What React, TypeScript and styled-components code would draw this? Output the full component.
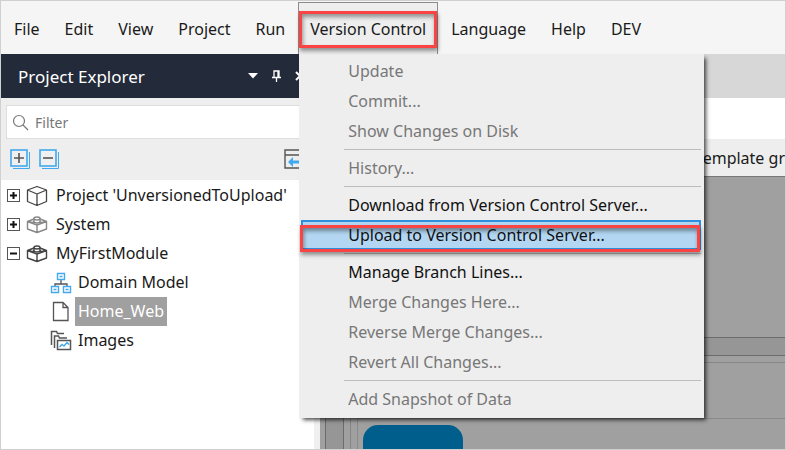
import React from "react";
import styled, { createGlobalStyle, css } from "styled-components";

const Global = createGlobalStyle`
  *, *::before, *::after { box-sizing: border-box; }
  body { margin: 0; font-family: "Noto Sans", "Segoe UI", sans-serif; font-size: 16px; color: #1a1a1a; }
  button, input { font: inherit; color: inherit; }
  ul { list-style: none; margin: 0; padding: 0; }
  svg { display: block; flex: none; }
`;

const Frame = styled.div`
  display: flex;
  flex-direction: column;
  height: 100vh;
  overflow: hidden;
  border: 1px solid #d0d0d0;
  background: #fff;
`;

const MenuBar = styled.nav`
  display: flex;
  flex: none;
  gap: 1px;
  height: 53px;
  padding: 1px 0 0 1px;
  background: #f5f5f5;
`;

const MenuSlot = styled.div<{ $open?: boolean }>`
  position: relative;
  display: flex;
  border: 1px solid transparent;
  border-bottom: 0;
  ${(p) => p.$open && css`background: #eee; border-color: #8c8c8c;`}
`;

const MenuButton = styled.button`
  border: 0;
  padding: 0 11px;
  background: none;
  white-space: nowrap;
`;

const Dropdown = styled.ul`
  position: absolute;
  z-index: 2;
  top: 100%;
  left: 0;
  width: 405px;
  padding: 2px 3px 4px 2px;
  background: #eee;
  box-shadow: 3px 3px 4px -1px rgba(0, 0, 0, 0.7);
`;

const Entry = styled.button<{ $active?: boolean }>`
  display: block;
  width: 100%;
  height: 30px;
  padding: 0 0 0 46px;
  border: 1px solid transparent;
  background: none;
  color: #111;
  text-align: left;
  white-space: nowrap;
  &:disabled { color: #777; }
  ${(p) => p.$active && css`background: #b3d7f3; border: 2px solid #2f8fdd; padding-left: 45px;`}
`;

const Separator = styled.li`
  height: 7px;
  margin-left: 43px;
  padding-top: 3px;
  &::before { content: ""; display: block; height: 1px; background: #bdbdbd; }
`;

const EntryItem = styled.li`
  position: relative;
`;

const Callout = styled.span<{ $for: "menu" | "entry" }>`
  position: absolute;
  z-index: 3;
  pointer-events: none;
  border: 3px solid #fa4343;
  box-shadow: 1px 3px 4px rgba(0, 0, 0, 0.4), inset 1px 3px 4px rgba(0, 0, 0, 0.4);
  ${(p) => (p.$for === "menu" ? css`inset: 8px 0 6px 0;` : css`inset: 5px 1px -2px -1px;`)}
`;

const Workspace = styled.div`
  display: flex;
  flex: 1;
  min-height: 0;
`;

const Sidebar = styled.aside`
  display: flex;
  flex-direction: column;
  flex: none;
  width: 319px;
  border-right: 6px solid #f0f0f0;
  background: #fff;
`;

const PanelTitle = styled.header`
  display: flex;
  align-items: center;
  flex: none;
  gap: 14px;
  height: 44px;
  padding: 0 9px 0 17px;
  background: #232a3a;
  color: #fff;
  h2 { flex: 1; margin: 0; font-size: 17px; font-weight: 400; }
`;

const IconButton = styled.button`
  display: flex;
  padding: 0;
  border: 0;
  background: none;
`;

const PanelTools = styled.div`
  display: flex;
  flex-direction: column;
  flex: none;
  gap: 10px;
  height: 82px;
  padding: 7px 0 0 5px;
  background: #eee;
`;

const Search = styled.label`
  display: flex;
  align-items: center;
  gap: 6px;
  height: 34px;
  padding-left: 5px;
  border: 1px solid #dedede;
  background: #fff;
  input {
    flex: 1; min-width: 0; border: 0; padding: 0; outline: 0; background: none; font-size: 14px;
  }
  input::placeholder { color: #777; opacity: 1; }
`;

const ToolRow = styled.div`
  display: flex;
  gap: 9px;
  padding: 0 10px 0 4px;
  > :last-child { margin-left: auto; }
`;

const Tree = styled.ul`
  padding-top: 1px;
`;

const Node = styled.li<{ $child?: boolean }>`
  display: flex;
  align-items: center;
  gap: ${(p) => (p.$child ? 3 : 5)}px;
  height: 29px;
  padding-left: ${(p) => (p.$child ? 49 : 5)}px;
`;

const NodeLabel = styled.span<{ $selected?: boolean }>`
  height: 29px;
  padding: 0 3px;
  line-height: 29px;
  white-space: nowrap;
  ${(p) => p.$selected && css`background: #a0a0a0; color: #fff;`}
`;

const Editor = styled.main`
  display: flex;
  flex-direction: column;
  flex: 1;
  min-width: 0;
`;
const TabStrip = styled.div`flex: none; height: 44px; background: #d7d7d7;`;
const TabBody = styled.div`flex: none; height: 41px; background: #fff;`;
const EditorTools = styled.div`
  display: flex;
  justify-content: flex-end;
  align-items: center;
  flex: none;
  height: 37px;
  background: #eee;
`;
const Canvas = styled.div`
  flex: 1;
  min-height: 0;
  overflow: hidden;
  padding: 160px 0 0 5px;
  border-top: 1px solid #787878;
  background: #a0a0a0;
`;
const Page = styled.div`
  padding: 17px 0 0 17px;
  border: solid #6c6c6c;
  border-width: 1px 0 0 1px;
  background: #969696;
`;
const LayoutBox = styled.div`
  padding: 6px 0 0 6px;
  border: solid #6c6c6c;
  border-width: 1px 0 0 1px;
  background: #a0a0a0;
`;
const Region = styled.div`
  padding: 55px 0 0 6px;
  border: solid #868686;
  border-width: 1px 0 0 1px;
`;
const Cell = styled.div`
  padding: 6px 0 0 5px;
  border: solid #8a8a8a;
  border-width: 1px 0 0 1px;
`;
const Widget = styled.div`
  width: 100px;
  height: 60px;
  border-radius: 15px;
  background: #005e8c;
`;

const Expander = ({ open }: { open?: boolean }) => (
  <svg width="15" height="15" viewBox="0 0 15 15" fill="none">
    <rect x="1.500" y="1.500" width="12" height="12" stroke="#555" />
    <path d={open ? "M4 7.500h7" : "M4 7.500h7M7.500 4v7"} stroke="#111" strokeWidth="2" />
  </svg>
);

const Cube = () => (
  <svg width="22" height="22" viewBox="0 0 22 22" fill="none" stroke="#444" strokeWidth="1.300" strokeLinejoin="round">
    <path d="M11 1.500 20.500 5v11.500L11 20.500 1.500 16.500V5zM1.500 5 11 9l9.500-4M11 9v11.500" />
  </svg>
);

const Brick = ({ color }: { color: string }) => (
  <svg width="22" height="22" viewBox="0 0 22 22" fill="none" stroke={color} strokeWidth="1.400" strokeLinejoin="round">
    <path d="M8 5 1.500 7.500v7.500L11 18.500l9.500-3.500V7.500L14 5M1.500 7.500 11 11l9.500-3.500M11 11v7.500" />
    <path d="M8 4.500v3c0 2 6 2 6 0v-3M4 7.500c1 1.500 4 1.500 4-1M14 6.500c0 2.500 3 2.500 4 1" />
    <ellipse cx="11" cy="4.500" rx="3" ry="1.500" />
  </svg>
);

const DomainIcon = () => (
  <svg width="22" height="22" viewBox="0 0 22 22" fill="none">
    <path d="M11 8v4M5 15v-3h12v3" stroke="#555" strokeWidth="1.300" />
    <g stroke="#42a9ee" strokeWidth="1.400">
      <path d="M7.500 1.500h7v6h-7zM1.500 14.500h7v6h-7zM13.500 14.500h7v6h-7z" />
      <path d="M9.500 4.500h3M3.500 17.500h3M15.500 17.500h3" />
    </g>
  </svg>
);

const PageIcon = () => (
  <svg width="22" height="22" viewBox="0 0 22 22" fill="none" stroke="#555" strokeWidth="1.300">
    <path d="M3.500 1.500h9.500L18 6.500v13H3.500zM13 1.500v5h5" />
  </svg>
);

const ImagesIcon = () => (
  <svg width="22" height="22" viewBox="0 0 22 22" fill="none" stroke="#555" strokeWidth="1.500">
    <path d="M1.500 15V1.500h5l1 2H14M4.500 18V6h4l1 2H17M7.500 10.500h13v9h-13z" />
    <path d="M9.500 17l2.500-2.500 2 1.500 3-3.500 2 2" stroke="#42a9ee" />
  </svg>
);

const ToggleAll = ({ plus }: { plus?: boolean }) => (
  <svg width="20" height="20" viewBox="0 0 20 20" fill="none">
    <path d="M3 19.500h16.500V3" stroke="#42a9ee" />
    <rect x="1" y="1" width="16" height="16" stroke="#42a9ee" strokeWidth="1.600" fill="#f0f0f0" />
    <path d={plus ? "M4 9h10M9 4v10" : "M4 9h10"} stroke="#555" strokeWidth="1.600" />
  </svg>
);

type MenuLine = { label: string; enabled?: boolean; active?: boolean } | null;
const versionMenu: MenuLine[] = [
  { label: "Update" },
  { label: "Commit..." },
  { label: "Show Changes on Disk" },
  null,
  { label: "History..." },
  null,
  { label: "Download from Version Control Server...", enabled: true },
  { label: "Upload to Version Control Server...", enabled: true, active: true },
  null,
  { label: "Manage Branch Lines...", enabled: true },
  { label: "Merge Changes Here..." },
  { label: "Reverse Merge Changes..." },
  { label: "Revert All Changes..." },
  null,
  { label: "Add Snapshot of Data" },
];

const menus = ["File", "Edit", "View", "Project", "Run", "Version Control", "Language", "Help", "DEV"];

export default function App() {
  return (
    <Frame>
      <Global />
      <MenuBar>
        {menus.map((name) => {
          const open = name === "Version Control";
          return (
            <MenuSlot key={name} $open={open}>
              <MenuButton>{name}</MenuButton>
              {open && <Callout $for="menu" />}
              {open && (
                <Dropdown>
                  {versionMenu.map((line, i) =>
                    line ? (
                      <EntryItem key={i}>
                        <Entry disabled={!line.enabled} $active={line.active}>{line.label}</Entry>
                        {line.active && <Callout $for="entry" />}
                      </EntryItem>
                    ) : (
                      <Separator key={i} role="separator" />
                    )
                  )}
                </Dropdown>
              )}
            </MenuSlot>
          );
        })}
      </MenuBar>
      <Workspace>
        <Sidebar>
          <PanelTitle>
            <h2>Project Explorer</h2>
            <IconButton aria-label="Panel options">
              <svg width="10" height="6" viewBox="0 0 10 6" fill="#fff"><path d="M0 0h10L5 5.500z" /></svg>
            </IconButton>
            <IconButton aria-label="Pin">
              <svg width="9" height="12" viewBox="0 0 9 12" fill="none" stroke="#fff" strokeWidth="1.300">
                <path d="M2 7V1h5v6M0 7.500h9M4.500 8v4M6 1v6" />
              </svg>
            </IconButton>
            <IconButton aria-label="Close">
              <svg width="10" height="10" viewBox="0 0 10 10" stroke="#fff" strokeWidth="2"><path d="M1 1l8 8M9 1l-8 8" /></svg>
            </IconButton>
          </PanelTitle>
          <PanelTools>
            <Search>
              <svg width="17" height="17" viewBox="0 0 17 17" fill="none" stroke="#777" strokeWidth="1.200">
                <circle cx="7" cy="7" r="5.500" /><path d="M11 11l5 5" />
              </svg>
              <input placeholder="Filter" aria-label="Filter" />
            </Search>
            <ToolRow>
              <IconButton aria-label="Expand all"><ToggleAll plus /></IconButton>
              <IconButton aria-label="Collapse all"><ToggleAll /></IconButton>
              <IconButton aria-label="Show active document">
                <svg width="20" height="20" viewBox="0 0 20 20" fill="none">
                  <path d="M1 1h18v18H1zM1 6h18" stroke="#555" strokeWidth="1.400" />
                  <path d="M4 13l5-5v3.500h8v3H9V18z" fill="#42a9ee" />
                </svg>
              </IconButton>
            </ToolRow>
          </PanelTools>
          <Tree>
            <Node><Expander /><Cube /><NodeLabel>Project 'UnversionedToUpload'</NodeLabel></Node>
            <Node><Expander /><Brick color="#888" /><NodeLabel>System</NodeLabel></Node>
            <Node><Expander open /><Brick color="#444" /><NodeLabel>MyFirstModule</NodeLabel></Node>
            <Node $child><DomainIcon /><NodeLabel>Domain Model</NodeLabel></Node>
            <Node $child><PageIcon /><NodeLabel $selected>Home_Web</NodeLabel></Node>
            <Node $child><ImagesIcon /><NodeLabel>Images</NodeLabel></Node>
          </Tree>
        </Sidebar>
        <Editor>
          <TabStrip />
          <TabBody />
          <EditorTools>emplate gr</EditorTools>
          <Canvas>
            <Page><LayoutBox><Region><Cell><Widget /></Cell></Region></LayoutBox></Page>
          </Canvas>
        </Editor>
      </Workspace>
    </Frame>
  );
}
